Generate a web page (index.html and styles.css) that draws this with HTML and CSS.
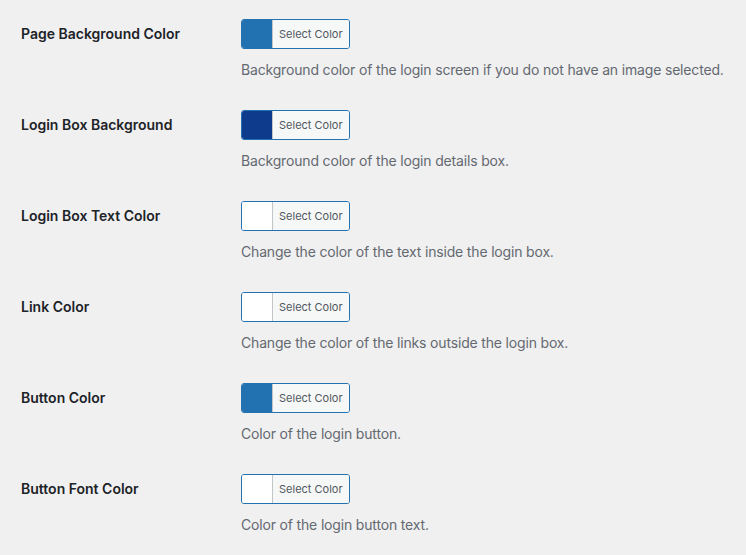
FILE: index.html
```html
<!DOCTYPE html>
<html lang="en">
<head>
<meta charset="utf-8">
<title>Login Settings</title>
<link rel="stylesheet" href="styles.css">
</head>
<body>
<div class="form-table">
  <div class="row">
    <div class="th">Page Background Color</div>
    <div class="td">
      <button class="color-result"><span class="swatch" style="background:#2271b1"></span><span class="result-text">Select Color</span></button>
      <p class="description">Background color of the login screen if you do not have an image selected.</p>
    </div>
  </div>
  <div class="row">
    <div class="th">Login Box Background</div>
    <div class="td">
      <button class="color-result"><span class="swatch" style="background:#0f3b8c"></span><span class="result-text">Select Color</span></button>
      <p class="description">Background color of the login details box.</p>
    </div>
  </div>
  <div class="row">
    <div class="th">Login Box Text Color</div>
    <div class="td">
      <button class="color-result"><span class="swatch" style="background:#ffffff"></span><span class="result-text">Select Color</span></button>
      <p class="description">Change the color of the text inside the login box.</p>
    </div>
  </div>
  <div class="row">
    <div class="th">Link Color</div>
    <div class="td">
      <button class="color-result"><span class="swatch" style="background:#ffffff"></span><span class="result-text">Select Color</span></button>
      <p class="description">Change the color of the links outside the login box.</p>
    </div>
  </div>
  <div class="row">
    <div class="th">Button Color</div>
    <div class="td">
      <button class="color-result"><span class="swatch" style="background:#2271b1"></span><span class="result-text">Select Color</span></button>
      <p class="description">Color of the login button.</p>
    </div>
  </div>
  <div class="row">
    <div class="th">Button Font Color</div>
    <div class="td">
      <button class="color-result"><span class="swatch" style="background:#ffffff"></span><span class="result-text">Select Color</span></button>
      <p class="description">Color of the login button text.</p>
    </div>
  </div>
</div>
</body>
</html>
```

FILE: styles.css
```css
html, body {
  margin: 0;
  padding: 0;
  background: #f0f0f1;
}
body {
  font-family: Inter, "Noto Sans", sans-serif;
  font-size: 14px;
  color: #3c434a;
  padding: 4px 0 0 21px;
}
.form-table {
  display: flex;
  flex-direction: column;
}
.row {
  display: flex;
  align-items: flex-start;
}
.th {
  flex: 0 0 200px;
  padding: 21px 10px 19px 0;
  font-weight: 600;
  line-height: 1.3;
  color: #1d2327;
}
.td {
  flex: 1 1 auto;
  padding: 15px 0 15px 10px;
  white-space: nowrap;
}
.color-result {
  display: flex;
  align-items: stretch;
  height: 30px;
  margin: 0;
  padding: 0;
  border: 1px solid #2271b1;
  border-radius: 3px;
  background: #f6f7f7;
  overflow: hidden;
  cursor: pointer;
  font-family: inherit;
}
.swatch {
  width: 30px;
  display: block;
}
.result-text {
  display: block;
  border-left: 1px solid #c3c4c7;
  background: #f6f7f7;
  color: #50575e;
  font-size: 11px;
  line-height: 28px;
  padding: 0 6px;
}
.description {
  margin: 10px 0 0;
  line-height: 1.5;
  color: #646970;
  letter-spacing: -0.17px;
}
```
